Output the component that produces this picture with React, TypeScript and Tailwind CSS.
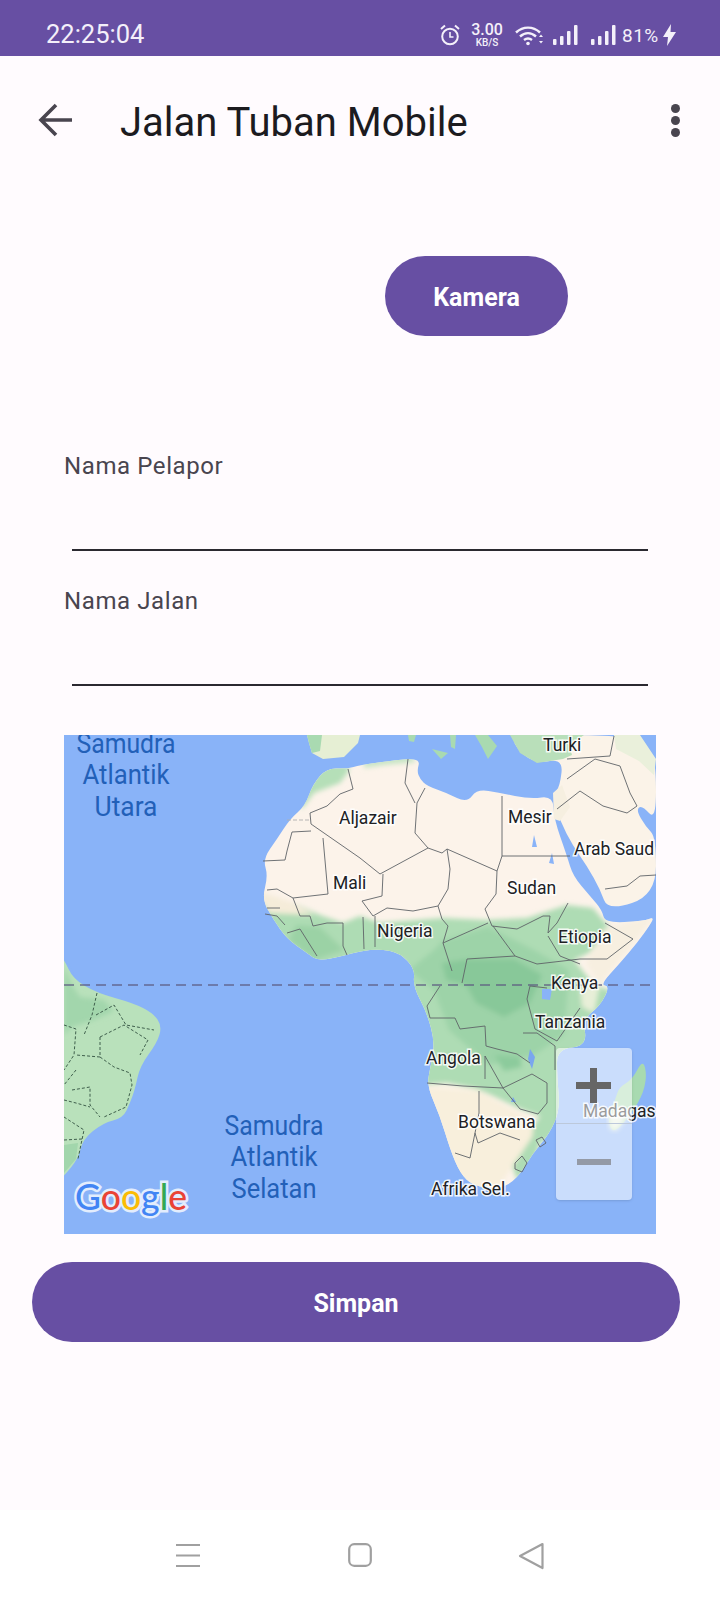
type Pt = [number, number]

// rounds a coast outline so it doesn't read as a polygon
function smooth(points: Pt[]) {
  const mid = (a: Pt, b: Pt): Pt => [(a[0] + b[0]) / 2, (a[1] + b[1]) / 2]
  const start = mid(points[points.length - 1], points[0])
  let d = `M${start[0]} ${start[1]}`
  points.forEach((p, i) => {
    const m = mid(p, points[(i + 1) % points.length])
    d += `Q${p[0]} ${p[1]} ${m[0]} ${m[1]}`
  })
  return d + 'Z'
}

const africaPts: Pt[] = [
  [263, 33], [283, 34], [296, 30], [326, 26], [343, 24], [356, 25], [353, 36], [356, 44], [363, 51], [383, 58], [403, 68], [413, 54], [436, 58], [466, 64], [489, 61],
  [490, 84], [503, 121], [509, 141], [526, 161], [538, 175], [541, 188], [580, 186], [590, 182], [586, 190], [573, 208], [556, 228], [536, 250], [546, 251], [536, 271], [519, 284], [523, 311],
  [493, 314], [493, 341], [496, 374], [486, 398], [469, 418], [453, 444], [436, 454], [409, 451], [396, 438], [386, 414], [376, 381], [363, 351], [366, 334], [371, 308], [363, 278], [349, 251],
  [351, 234], [336, 218], [316, 214], [296, 216], [279, 221], [254, 226], [243, 218], [223, 204], [209, 184], [198, 164], [204, 141], [199, 124], [213, 104], [226, 84], [241, 71], [249, 49],
]

const northPts: Pt[] = [
  [446, 0], [456, 18], [473, 28], [499, 24], [496, 51], [489, 61], [496, 86], [509, 111], [523, 131], [536, 154], [544, 176], [592, 160], [592, 102], [582, 92], [572, 75], [578, 70], [592, 86], [592, 28], [585, 20], [575, 0],
]

const brazilPts: Pt[] = [
  [-6, 220], [0, 224], [9, 244], [33, 258], [69, 268], [89, 278], [98, 291], [93, 308], [76, 331], [71, 354], [66, 368], [59, 383], [39, 388], [19, 404], [14, 424], [0, 441], [-6, 445],
]

const madagascarPts: Pt[] = [
  [579, 324], [583, 341], [578, 362], [563, 384], [552, 396], [546, 394], [544, 378], [551, 366], [555, 352], [568, 345],
]

const borders = [
  'M284 34L289 54L276 59L263 71L246 78L247 89L296 123L316 139L364 113L378 118L383 114L433 136L438 121L438 61',
  'M438 121L506 121',
  'M247 96L228 97L223 116L221 125L199 126',
  'M259 103L264 159L229 163L213 154L203 155',
  'M364 113L351 98L353 68L361 53',
  'M351 68L341 48L344 24',
  'M383 114L386 134L384 154L374 171L349 176L323 173L309 181L298 166L318 161L319 139',
  'M433 136L432 159L421 174L428 191L453 194L479 181L486 181L484 198L493 188L504 168',
  'M374 171L378 184L384 191L379 208L388 236',
  'M424 188L379 208',
  'M429 191L451 221L403 224L398 248',
  'M451 221L473 229L516 224L543 224L569 204L541 188',
  'M484 201L496 221L516 229',
  'M229 163L236 181L246 181L249 191L263 188L279 188L279 211L283 220',
  'M223 198L236 194L253 221',
  'M203 173L216 173',
  'M201 179L213 181L221 190',
  'M299 182L300 214',
  'M311 181L311 212',
  'M493 74L516 56L539 71L563 78L573 71',
  'M503 44L531 24L556 31L566 58L573 71',
  'M503 24L546 21L550 1',
  'M541 154L563 151L576 141L592 140',
  'M376 251L363 271L366 283L391 283L396 294L421 291L422 311L433 314L453 319L466 328',
  'M459 298L473 298L491 311L491 335',
  'M466 251L463 264L471 294L493 306',
  'M483 253L466 251',
  'M516 273L493 306',
  'M363 348L399 351L439 353L421 321L421 344',
  'M468 339L483 348L483 368L474 379L456 374L439 353',
  'M468 339L439 353',
  'M415 356L415 378L411 398L414 408L436 398L456 405',
  'M391 418L406 423L411 398',
  'M451 428L458 421L463 428L458 437L451 434Z',
  'M472 405L478 402L482 408L476 412Z',
]

const brazilBorders = [
  'M33 258L28 280L20 300',
  'M0 290L12 294L10 320L0 335',
  'M32 280L50 270L62 290L90 295',
  'M36 302L60 290L84 305L76 320',
  'M36 302L36 322L12 320',
  'M36 322L50 332L66 338L68 350L62 372L40 382',
  'M12 335L0 350',
  'M8 355L26 352L26 370L36 382',
  'M0 365L12 368L26 372',
  'M0 382L20 395L14 424',
  'M0 405L18 404',
]

function MapLabel({ x, y, children }: { x: number; y: number; children: string }) {
  return (
    <text
      x={x}
      y={y}
      fontSize="17.5"
      fill="#202124"
      stroke="#ffffff"
      strokeWidth="3"
      strokeOpacity="0.85"
      paintOrder="stroke"
    >
      {children}
    </text>
  )
}

function SeaLabel({ x, y, len, children }: { x: number; y: number; len: number; children: string }) {
  return (
    <text
      x={x}
      y={y}
      fontSize="27.5"
      fill="#2260b8"
      textAnchor="middle"
      textLength={len}
      lengthAdjust="spacingAndGlyphs"
    >
      {children}
    </text>
  )
}

function WorldMap() {
  const africa = smooth(africaPts)
  return (
    <svg viewBox="0 0 592 499" className="block w-full h-full font-['Roboto',sans-serif]">
      <defs>
        <clipPath id="africa-clip">
          <path d={africa} />
        </clipPath>
        <filter id="soft" x="-10%" y="-10%" width="120%" height="120%">
          <feGaussianBlur stdDeviation="2.5" />
        </filter>
      </defs>
      <rect width="592" height="499" fill="#89b3f8" />

      {/* europe and islands */}
      <path d="M243 0L296 0L294 8L280 22L259 24L248 18L245 8Z" fill="#e6efd4" />
      <path d="M243 0L258 0L256 16L248 18L245 8Z" fill="#a9dab1" />
      <path d="M344 0L352 0L350 7L345 6Z M368 14L384 18L377 24Z M386 0L392 0L391 14L387 12Z M411 0L424 0L433 11L424 24L418 12Z" fill="#a9dab1" />

      <path d={smooth(northPts)} fill="#fbf3e8" />
      <path d="M446 0L456 18L473 28L499 24L508 20L505 10L520 0Z" fill="#b9dfba" />
      <path d="M520 0L550 0L552 14L575 26L590 40L592 24L576 0Z" fill="#eaf0db" />
      <path d={africa} fill="#fcf3ea" />
      <path d="M489 58L498 50L506 72L496 86L490 84Z" fill="#f6efe0" />

      <g clipPath="url(#africa-clip)">
        <g filter="url(#soft)">
          <path d="M240 25L283 25L285 36L276 48L250 58L238 74L232 60Z" fill="#b5dfb8" />
          <path d="M300 22L345 18L352 27L320 30L300 33Z" fill="#c6e5c4" />
          <path d="M190 170L229 168L256 180L279 188L296 181L316 188L379 183L423 185L463 183L503 170L529 173L545 192L525 218L510 225L530 250L560 260L540 300L530 330L495 400L476 408L470 430L453 445L446 425L470 390L476 381L456 374L429 361L413 354L383 348L355 350L340 300L340 225L190 240Z" fill="#aedcb4" />
          <path d="M232 190L256 192L280 215L250 225L225 205Z" fill="#9bd2a5" />
          <path d="M379 205L424 192L470 215L505 235L500 300L470 320L425 330L385 295L370 255L345 235L370 215Z" fill="#9dd3a8" />
          <path d="M378 228L405 224L450 224L478 240L466 268L440 282L412 268L402 250L382 245Z" fill="#88c899" />
          <path d="M430 320L456 322L458 332L440 336Z" fill="#8ccb9c" />
          <path d="M190 155L225 166L250 180L205 178Z" fill="#f5ecd9" />
          <path d="M540 194L592 180L536 250L522 228Z" fill="#f7efe0" />
          <path d="M516 252L536 248L530 278L518 272Z" fill="#e8efd8" />
          <path d="M360 352L414 356L440 370L470 387L468 402L448 432L430 460L405 455L390 436L380 405Z" fill="#f8efdc" />
        </g>
      </g>

      <path d={smooth(madagascarPts)} fill="#a8dab0" />
      <path d="M552 396L546 394L544 380L556 372L562 384Z" fill="#e9f2e2" filter="url(#soft)" />

      <path d={smooth(brazilPts)} fill="#b9e1bb" />
      <path d="M0 232L8 250L16 262L40 265L50 276L30 285L8 292L0 300Z" fill="#a2d6ac" filter="url(#soft)" />
      <path d="M0 410L14 408L12 424L0 438Z" fill="#a2d6ac" />

      {/* lakes */}
      <path d="M478 254L488 254L486 265L478 264Z" fill="#89b3f8" />
      <path d="M466 314L471 322L468 334L464 324Z M447 367L449 362L452 367Z" fill="#7aa6ee" />
      <path d="M485 128L488 118L490 129Z M470 100L473 112L468 112Z" fill="#89b3f8" />

      <g fill="none" stroke="#5f6368" strokeWidth="0.9">
        {borders.map((d) => (
          <path key={d} d={d} />
        ))}
        <path d="M223 85L246 85" strokeDasharray="4 2" stroke="#b0b0b0" />
      </g>
      <g fill="none" stroke="#3f5f4c" strokeWidth="1" strokeDasharray="3 2">
        {brazilBorders.map((d) => (
          <path key={d} d={d} />
        ))}
      </g>

      {/* equator */}
      <line x1="0" y1="250" x2="592" y2="250" stroke="#5d5a80" strokeOpacity="0.85" strokeWidth="1.6" strokeDasharray="10 6" />

      <SeaLabel x={62} y={18} len={99}>Samudra</SeaLabel>
      <SeaLabel x={62} y={49} len={87}>Atlantik</SeaLabel>
      <SeaLabel x={62} y={81} len={63}>Utara</SeaLabel>
      <SeaLabel x={210} y={400} len={99}>Samudra</SeaLabel>
      <SeaLabel x={210} y={431} len={87}>Atlantik</SeaLabel>
      <SeaLabel x={210} y={463} len={85}>Selatan</SeaLabel>

      <MapLabel x={479} y={16}>Turki</MapLabel>
      <MapLabel x={275} y={89}>Aljazair</MapLabel>
      <MapLabel x={444} y={88}>Mesir</MapLabel>
      <MapLabel x={510} y={120}>Arab Saud</MapLabel>
      <MapLabel x={269} y={154}>Mali</MapLabel>
      <MapLabel x={443} y={159}>Sudan</MapLabel>
      <MapLabel x={313} y={202}>Nigeria</MapLabel>
      <MapLabel x={494} y={208}>Etiopia</MapLabel>
      <MapLabel x={487} y={254}>Kenya</MapLabel>
      <MapLabel x={471} y={293}>Tanzania</MapLabel>
      <MapLabel x={362} y={329}>Angola</MapLabel>
      <MapLabel x={519} y={382}>Madagas</MapLabel>
      <MapLabel x={394} y={393}>Botswana</MapLabel>
      <MapLabel x={367} y={460}>Afrika Sel.</MapLabel>

      {/* google logo */}
      <text
        x="11"
        y="475"
        fontSize="37"
        fontWeight="500"
        textLength="112"
        lengthAdjust="spacingAndGlyphs"
        stroke="#e3edfd"
        strokeWidth="5"
        paintOrder="stroke"
        className="font-['Lato',sans-serif]"
      >
        <tspan fill="#4285f4">G</tspan>
        <tspan fill="#ea4335">o</tspan>
        <tspan fill="#fbbc05">o</tspan>
        <tspan fill="#4285f4">g</tspan>
        <tspan fill="#34a853">l</tspan>
        <tspan fill="#ea4335">e</tspan>
      </text>
    </svg>
  )
}

function StatusBar() {
  return (
    <div className="h-[56px] bg-[#674fa3] flex items-center text-[#f4f0fa] shrink-0 pl-[46px] pt-[14px]">
      <span className="text-[25.5px] leading-none w-[394px]">22:25:04</span>
      <svg width="20" height="22" viewBox="0 0 20 22" fill="none" stroke="#f4f0fa" strokeWidth="2">
        <circle cx="10" cy="12.5" r="7.8" />
        <path d="M10 8v5h3.5" strokeWidth="1.6" />
        <path d="M1 5l4-3.5M19 5l-4-3.5" />
      </svg>
      <div className="w-[32px] ml-[11px] flex flex-col items-center font-medium">
        <span className="text-[16px] leading-[15px]">3.00</span>
        <span className="text-[10px] leading-[11px]">KB/S</span>
      </div>
      <svg width="28" height="21" viewBox="0 0 28 21" fill="none" stroke="#f4f0fa" strokeWidth="2.4" className="ml-[12px]">
        <path d="M1 7.5C8 1 18 1 25 7.5" />
        <path d="M5 11.5C10 7 16 7 21 11.5" />
        <path d="M9 15C11.5 13 14.5 13 17 15" />
        <circle cx="13" cy="18.5" r="1.8" fill="#f4f0fa" stroke="none" />
        <path d="M24 12l2-2.5 2 2.5ZM24 16l2 2.5 2-2.5Z" fill="#f4f0fa" stroke="none" />
      </svg>
      <svg width="25" height="20" viewBox="0 0 25 20" fill="#f4f0fa" className="ml-[10px]">
        <rect x="0" y="14" width="3.5" height="6" rx="1" />
        <rect x="7" y="11" width="3.5" height="9" rx="1" />
        <rect x="14" y="6" width="3.5" height="14" rx="1" />
        <rect x="21" y="0" width="3.5" height="20" rx="1" />
      </svg>
      <svg width="25" height="20" viewBox="0 0 25 20" fill="#f4f0fa" className="ml-[13px]">
        <rect x="0" y="14" width="3.5" height="6" rx="1" />
        <rect x="7" y="11" width="3.5" height="9" rx="1" />
        <rect x="14" y="6" width="3.5" height="14" rx="1" />
        <rect x="21" y="0" width="3.5" height="20" rx="1" />
      </svg>
      <span className="text-[19px] leading-none ml-[6px] tracking-[0.5px]">81%</span>
      <svg width="13" height="22" viewBox="0 0 13 22" fill="#f4f0fa" className="ml-[4px]">
        <path d="M8 0L0 13h5l-1 9 9-14H7.5Z" />
      </svg>
    </div>
  )
}

function NavBar() {
  return (
    <div className="h-[90px] bg-white flex shrink-0 pt-[33px] text-[#a0a0a0]">
      <svg width="24" height="24" viewBox="0 0 24 24" stroke="currentColor" strokeWidth="2" className="ml-[176px]">
        <path d="M0 2h24M0 12.5h24M0 23h24" />
      </svg>
      <svg width="24" height="24" viewBox="0 0 24 24" fill="none" stroke="currentColor" strokeWidth="2.2" className="ml-[148px]">
        <rect x="1.2" y="1.2" width="21.6" height="21.6" rx="5" />
      </svg>
      <svg width="26" height="28" viewBox="0 0 26 28" fill="none" stroke="currentColor" strokeWidth="2.2" strokeLinejoin="round" className="ml-[146px] -mt-[1px]">
        <path d="M24.5 2L2 14l22.5 12Z" />
      </svg>
    </div>
  )
}

export default function App() {
  return (
    <div className="w-[720px] h-[1600px] bg-[#fffbfe] flex flex-col font-['Roboto',sans-serif] overflow-hidden">
      <StatusBar />

      {/* app bar */}
      <div className="h-[128px] flex items-start pt-[44px] shrink-0">
        <svg width="34" height="34" viewBox="0 0 34 34" fill="none" stroke="#49454f" strokeWidth="3.6" className="ml-[38px] mt-[3px]">
          <path d="M34 17H3M18 2L3 17l15 15" />
        </svg>
        <span className="ml-[48px] text-[40px] leading-[46px] text-[#1c1b1f] flex-1">Jalan Tuban Mobile</span>
        <div className="mr-[40px] mt-[4px] flex flex-col gap-[3px]">
          <div className="w-[9px] h-[9px] rounded-full bg-[#49454f]" />
          <div className="w-[9px] h-[9px] rounded-full bg-[#49454f]" />
          <div className="w-[9px] h-[9px] rounded-full bg-[#49454f]" />
        </div>
      </div>

      <div className="flex-1 flex flex-col">
        <div className="flex justify-end pr-[152px] mt-[72px]">
          <button className="w-[183px] h-[80px] pt-[4px] rounded-full bg-[#674fa3] text-white text-[25px] font-bold">Kamera</button>
        </div>

        <label className="ml-[64px] mt-[114px] text-[24px] leading-[32px] tracking-[0.6px] text-[#49454f]">Nama Pelapor</label>
        <div className="ml-[72px] w-[576px] h-[2px] bg-[#2b2930] mt-[67px]" />
        <label className="ml-[64px] mt-[34px] text-[24px] leading-[32px] tracking-[0.6px] text-[#49454f]">Nama Jalan</label>
        <div className="ml-[72px] w-[576px] h-[2px] bg-[#2b2930] mt-[67px]" />

        <div className="relative ml-[64px] w-[592px] h-[499px] mt-[49px] overflow-hidden">
          <WorldMap />
          {/* zoom controls */}
          <div className="absolute left-[492px] top-[313px] w-[76px] h-[152px] rounded-[4px] bg-white/55 shadow-sm flex flex-col">
            <div className="h-[76px] pr-[2px] flex items-center justify-center border-b border-[#bcc8da]">
              <svg width="35" height="35" viewBox="0 0 35 35" fill="#666666">
                <path d="M14 0h7v14h14v7H21v14h-7V21H0v-7h14Z" />
              </svg>
            </div>
            <div className="flex-1 flex items-center justify-center">
              <div className="w-[34px] h-[6px] bg-[#949aa6]" />
            </div>
          </div>
        </div>

        <button className="ml-[32px] w-[648px] h-[80px] pt-[4px] mt-[28px] rounded-full bg-[#674fa3] text-white text-[25px] font-bold">Simpan</button>
      </div>

      <NavBar />
    </div>
  )
}
